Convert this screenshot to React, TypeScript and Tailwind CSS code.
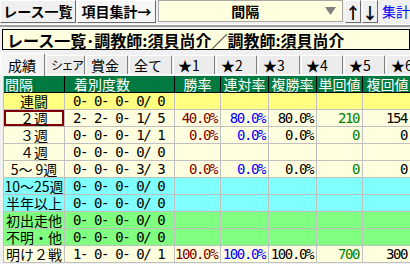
import React from "react";

const JP = { fontFamily: '"Noto Sans CJK JP", "Noto Sans", sans-serif' };
const MONO = {
  fontFamily: '"DejaVu Sans Mono", "Noto Sans CJK JP", monospace',
  letterSpacing: "-1.4px",
};

type Row = {
  label: string;
  rec: string;
  w?: string;
  r?: string;
  f?: string;
  t?: string;
  h?: string;
  bg: string;
  sel?: boolean;
};

const CREAM = "bg-[#ffffe0]";
const rows: Row[] = [
  { label: "連闘", rec: "0- 0- 0- 0/ 0", bg: "bg-[#ffff80]" },
  { label: "２週", rec: "2- 2- 0- 1/ 5", w: "40.0%", r: "80.0%", f: "80.0%", t: "210", h: "154", bg: CREAM, sel: true },
  { label: "３週", rec: "0- 0- 0- 1/ 1", w: "0.0%", r: "0.0%", f: "0.0%", t: "0", h: "0", bg: CREAM },
  { label: "４週", rec: "0- 0- 0- 0/ 0", bg: CREAM },
  { label: "5～ 9週", rec: "0- 0- 0- 3/ 3", w: "0.0%", r: "0.0%", f: "0.0%", t: "0", h: "0", bg: CREAM },
  { label: "10～25週", rec: "0- 0- 0- 0/ 0", bg: "bg-[#80ffff]" },
  { label: "半年以上", rec: "0- 0- 0- 0/ 0", bg: "bg-[#80ffff]" },
  { label: "初出走他", rec: "0- 0- 0- 0/ 0", bg: "bg-[#80ff80]" },
  { label: "不明・他", rec: "0- 0- 0- 0/ 0", bg: "bg-[#80ff80]" },
  { label: "明け２戦", rec: "1- 0- 0- 0/ 1", w: "100.0%", r: "100.0%", f: "100.0%", t: "700", h: "300", bg: CREAM },
];

const tabs = [
  { t: "成績", w: "w-[45px]", x: "text-[14px]" },
  { t: "シェア", w: "w-[39px]", x: "text-[12px] tracking-[-1.5px]" },
  { t: "賞金", w: "w-[42px]", x: "text-[14px]" },
  { t: "全て", w: "w-[43px]", x: "text-[14px]" },
  { t: "★1", w: "w-[42px]", x: "text-[14px]" },
  { t: "★2", w: "w-[41px]", x: "text-[14px]" },
  { t: "★3", w: "w-[42px]", x: "text-[14px]" },
  { t: "★4", w: "w-[42px]", x: "text-[14px]" },
  { t: "★5", w: "w-[41px]", x: "text-[14px]" },
  { t: "★6", w: "w-[42px]", x: "text-[14px]" },
];

function Btn({ children, className }: { children: React.ReactNode; className: string }) {
  return (
    <div
      className={`h-[23px] flex items-center justify-center border border-t-white border-l-white border-r-[#6a6a6a] border-b-[#6a6a6a] bg-[#f0f0f0] text-[14px] font-bold text-black ${className}`}
      style={JP}
    >
      {children}
    </div>
  );
}

export default function App() {
  return (
    <div className="w-[410px] h-[264px] overflow-hidden bg-[#f0f0f0] relative" style={JP}>
      {/* top bar */}
      <div className="flex items-start h-[23px]">
        <Btn className="w-[77px]">レース一覧</Btn>
        <Btn className="w-[81px] ml-px bg-[#f6f6f6]">項目集計→</Btn>
        <div className="ml-[2px] w-[188px] h-[22px] bg-[#ffffe0] border border-[#a8a8a8] flex items-center">
          <div className="flex-1 text-center text-[14px] font-bold leading-none pl-[6px]">間隔</div>
          <svg width="11" height="8" viewBox="0 0 11 8" className="mr-[6px]">
            <polygon points="0,0 11,0 5.5,8" fill="#808080" />
          </svg>
        </div>
        <Btn className="w-[16px] ml-[2px] h-[22px]">
          <span className="text-[16px] leading-none">↑</span>
        </Btn>
        <Btn className="w-[16px] ml-px h-[22px]">
          <span className="text-[16px] leading-none">↓</span>
        </Btn>
        <div className="ml-[4px] h-[22px] flex items-center text-[14px] text-[#0000ff] whitespace-nowrap">集計</div>
      </div>
      {/* separator */}
      <div className="h-px bg-white mt-px" />
      <div className="h-[2px] bg-[#a0a0a0]" />
      {/* title */}
      <div className="mt-[2px] ml-[2px] h-[21px] border border-black bg-[#ffffe0] flex items-center pl-[4px] text-[16px] font-bold whitespace-nowrap overflow-hidden">
        レース一覧･調教師:須貝尚介／調教師:須貝尚介
      </div>
      {/* tabs */}
      <div className="mt-[1px] h-[25px] flex items-end relative">
        {tabs.map((tb, i) => (
          <div
            key={tb.t}
            className={`${tb.w} shrink-0 mr-px flex items-center text-black border-l border-t border-r border-l-white border-t-white border-r-[#808080] rounded-t-[2px] whitespace-nowrap overflow-hidden ${
              i === 0 ? "h-[23px] pl-[7px] bg-[#f4f4f4]" : "h-[19px] mb-[2px] pl-[4px] bg-[#ececec]"
            }`}
          >
            <span className={tb.x}>{tb.t}</span>
          </div>
        ))}
        <div className="absolute left-[45px] right-0 bottom-[1px] h-px bg-white" />
      </div>
      {/* table */}
      <div className="ml-[3px] border-l border-[#c0c0c0]">
        <div className="flex h-[17px] bg-[#007a40] text-white text-[14px] leading-[16px] border-b border-black">
          <div className="w-[61px] shrink-0 border-r border-black pl-[1px]">間隔</div>
          <div className="w-[110px] shrink-0 border-r border-black pl-[9px]">着別度数</div>
          <div className="w-[46px] shrink-0 border-r border-black text-center">勝率</div>
          <div className="w-[48px] shrink-0 border-r border-black text-center">連対率</div>
          <div className="w-[48px] shrink-0 border-r border-black text-center">複勝率</div>
          <div className="w-[46px] shrink-0 border-r border-black text-center">単回値</div>
          <div className="w-[50px] shrink-0 border-r border-black text-center whitespace-nowrap">複回値</div>
        </div>
        {rows.map((r) => (
          <div key={r.label} className={`flex h-[17px] ${r.bg} border-b border-[#c0c0c0] text-[14px] leading-[16px]`}>
            <div
              className={`w-[61px] shrink-0 border-r border-[#c0c0c0] text-center whitespace-nowrap ${
                r.sel ? "ring-2 ring-inset ring-[#800000]" : ""
              }`}
            >
              {r.label}
            </div>
            <div className="w-[110px] shrink-0 border-r border-[#c0c0c0] pl-[8px] whitespace-pre" style={MONO}>
              {r.rec}
            </div>
            <div className="w-[46px] shrink-0 border-r border-[#c0c0c0] text-right pr-[3px] text-[#800000]" style={MONO}>
              {r.w}
            </div>
            <div className="w-[48px] shrink-0 border-r border-[#c0c0c0] text-right pr-[3px] text-[#0000ff]" style={MONO}>
              {r.r}
            </div>
            <div className="w-[48px] shrink-0 border-r border-[#c0c0c0] text-right pr-[3px] text-black" style={MONO}>
              {r.f}
            </div>
            <div className="w-[46px] shrink-0 border-r border-[#c0c0c0] text-right pr-[3px] text-[#008000]" style={MONO}>
              {r.t}
            </div>
            <div className="w-[50px] shrink-0 border-r border-[#c0c0c0] text-right pr-[5px] text-black" style={MONO}>
              {r.h}
            </div>
          </div>
        ))}
      </div>
    </div>
  );
}
